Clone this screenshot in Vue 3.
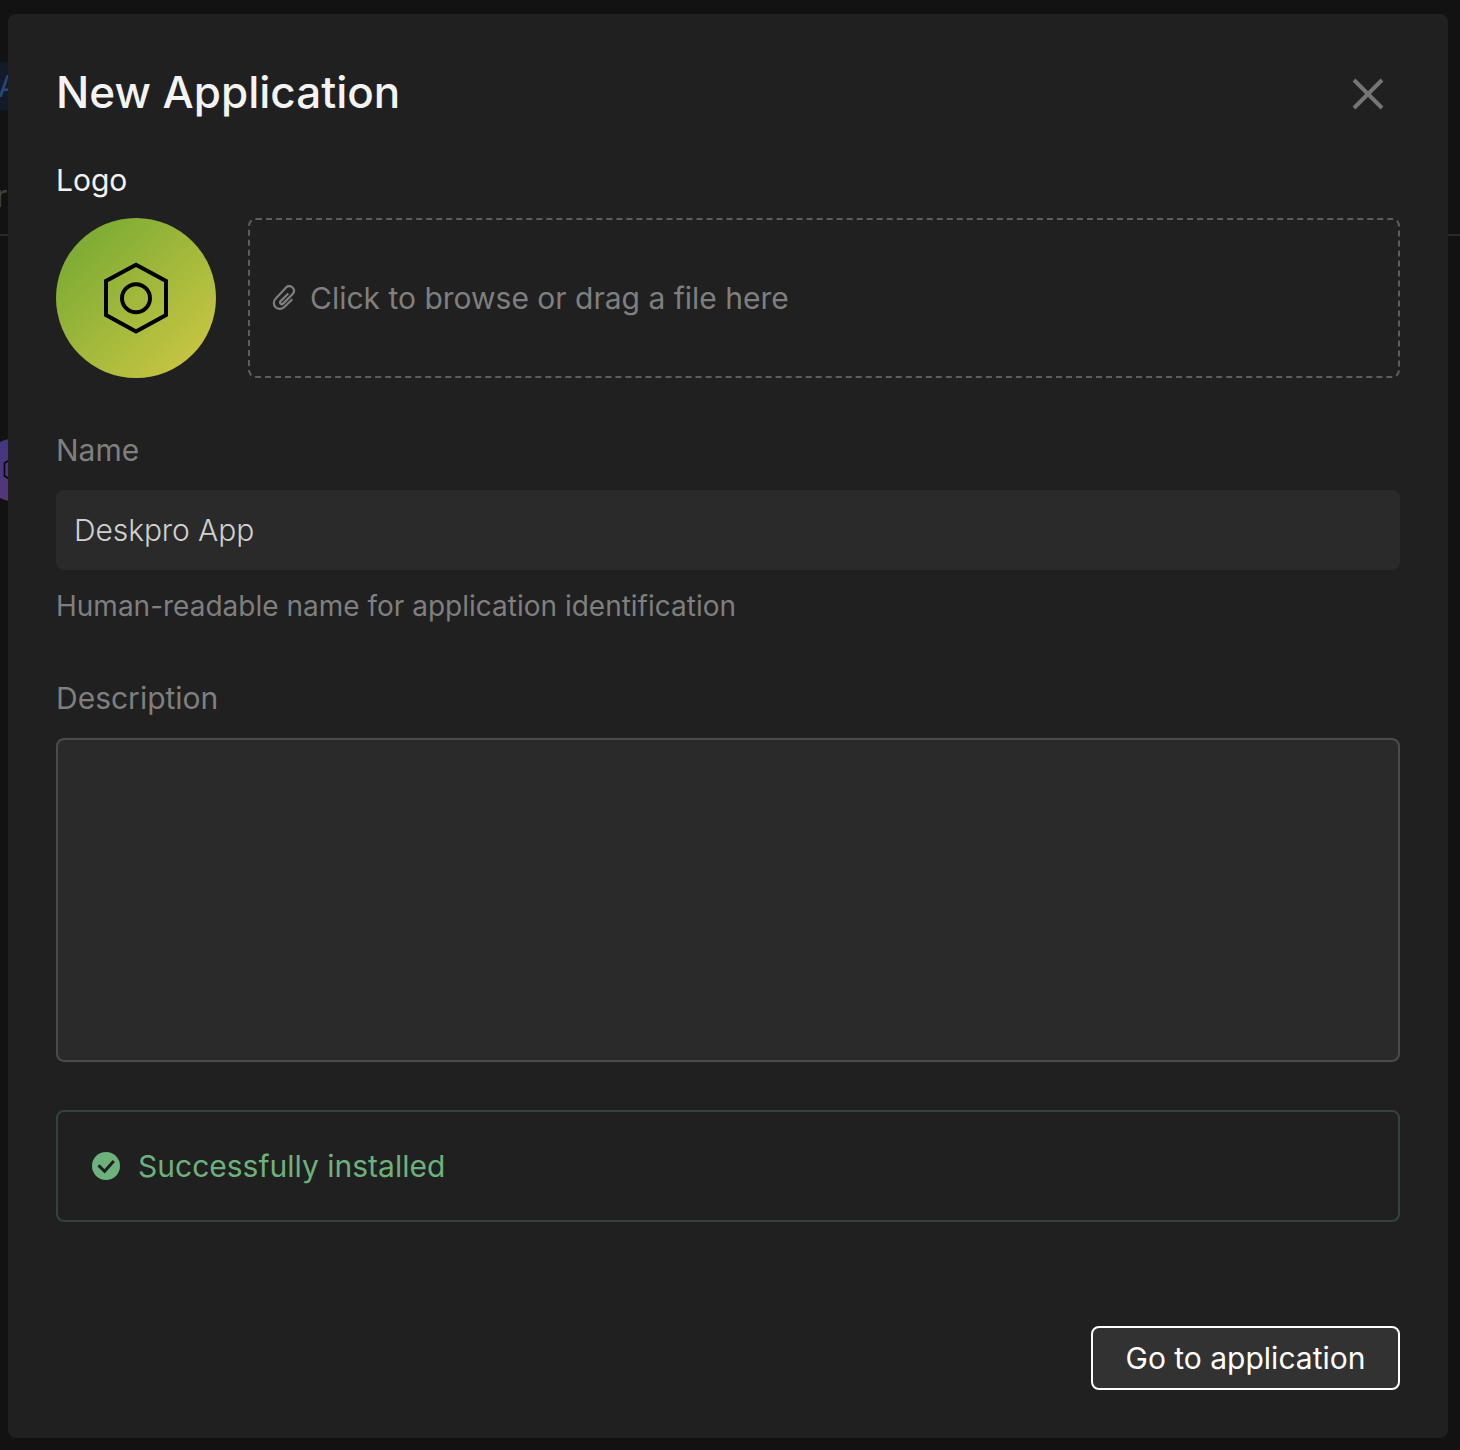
<script setup>
import { ref } from 'vue'

const name = ref('Deskpro App')
const description = ref('')
</script>

<template>
  <div class="page">
    <div class="backdrop" aria-hidden="true">
      <div class="tab">A</div>
      <div class="column">r</div>
      <div class="rule"></div>
      <svg class="app-badge" viewBox="0 0 64 64">
        <defs>
          <linearGradient id="badge" x1="0" y1="0" x2="0" y2="1">
            <stop offset="0" stop-color="#423782" />
            <stop offset="1" stop-color="#573577" />
          </linearGradient>
        </defs>
        <circle cx="32" cy="32" r="32" fill="url(#badge)" />
        <path d="M32 18.500 43.500 25v13L32 45l-11.500-7V25z" fill="none" stroke="#080808" stroke-width="1.600" />
      </svg>
    </div>

    <section class="modal" role="dialog">
      <header class="head">
        <h1>New Application</h1>
        <button class="close" aria-label="Close">
          <svg width="32" height="32" viewBox="0 0 32 32">
            <path d="M2 2 30 30M30 2 2 30" stroke="#757575" stroke-width="4" />
          </svg>
        </button>
      </header>

      <div class="label strong">Logo</div>
      <div class="logo-row">
        <div class="logo">
          <svg width="64" height="72" viewBox="0 0 64 72" fill="none" stroke="#000" stroke-width="4">
            <path d="M32 2.700 62 19v34L32 69.500 2 53V19z" />
            <circle cx="32" cy="36.300" r="14" />
          </svg>
        </div>
        <div class="drop">
          <svg width="24" height="26" viewBox="0 0 24 26" fill="none" stroke="#7f7f7f" stroke-width="2.200">
            <path d="M16.300 8.500 8.600 16.100a1.750 1.750 0 0 0 2.500 2.500L20.900 8.800a4.700 4.700 0 0 0-6.600-6.600L3.600 13.700a6 6 0 0 0 8.500 8.500l8.200-8" />
          </svg>
          <span>Click to browse or drag a file here</span>
        </div>
      </div>

      <div class="label name-label">Name</div>
      <input v-model="name" class="input" />
      <div class="hint">Human-readable name for application identification</div>

      <div class="label desc-label">Description</div>
      <textarea v-model="description" class="area"></textarea>

      <div class="alert">
        <svg width="28" height="28" viewBox="0 0 28 28">
          <circle cx="14" cy="14" r="14" fill="#6db17c" />
          <path d="m6.500 13.400 6.100 5.900L21.800 9" fill="none" stroke="#202020" stroke-width="3" />
        </svg>
        <span>Successfully installed</span>
      </div>

      <footer class="foot">
        <button class="go">Go to application</button>
      </footer>
    </section>
  </div>
</template>

<style>
body {
  background: #121212;
}
</style>

<style scoped>
.page {
  position: relative;
  box-sizing: border-box;
  width: 1460px;
  height: 1450px;
  padding: 14px 12px 12px 8px;
  overflow: hidden;
  background: #121212;
  font-family: Inter, sans-serif;
  font-size: 30px;
}
.backdrop {
  position: absolute;
  inset: 0;
}
.tab {
  position: absolute;
  top: 62px;
  left: 0;
  width: 60px;
  height: 48px;
  background: #141b28;
  color: #23477f;
  line-height: 48px;
  text-indent: -2px;
}
.column {
  position: absolute;
  top: 176px;
  left: -4px;
  color: #414141;
  line-height: 40px;
}
.rule {
  position: absolute;
  top: 234px;
  left: 0;
  width: 100%;
  height: 2px;
  background: #2a2a2a;
}
.app-badge {
  position: absolute;
  top: 438px;
  left: -16px;
  width: 64px;
  height: 64px;
}
.modal {
  position: relative;
  display: flex;
  flex-direction: column;
  box-sizing: border-box;
  height: 1424px;
  padding: 48px;
  border-radius: 8px;
  background: #202020;
}
.head {
  display: flex;
  justify-content: space-between;
  align-items: center;
  height: 60px;
  padding-right: 16px;
}
h1 {
  margin: 0;
  color: #f3f3f3;
  font-size: 44px;
  font-weight: 500;
  line-height: 60px;
}
button {
  padding: 0;
  border: 0;
  background: none;
  font: inherit;
}
.close {
  height: 32px;
  margin-top: 4px;
}
svg {
  display: block;
  flex: none;
}
.label {
  color: #7f7f7f;
  line-height: 40px;
}
.strong {
  margin-top: 38px;
  color: #f3f3f3;
}
.logo-row {
  display: flex;
  gap: 32px;
  margin-top: 18px;
}
.logo {
  display: grid;
  place-items: center;
  width: 160px;
  height: 160px;
  border-radius: 50%;
  background: linear-gradient(135deg, #6fa732 0%, #d2c944 100%);
}
.drop {
  display: flex;
  align-items: center;
  gap: 14px;
  box-sizing: border-box;
  width: 1152px;
  padding-left: 22px;
  border: 2px dashed #5d5d5d;
  border-radius: 8px;
  color: #7f7f7f;
}
.name-label {
  margin-top: 52px;
}
.input,
.area {
  box-sizing: border-box;
  width: 1344px;
  border: 0;
  border-radius: 8px;
  outline: 0;
  background: #2a2a2a;
  color: #d0d0d0;
  font: 300 30px Inter, sans-serif;
  letter-spacing: -0.1px;
}
.input {
  height: 80px;
  margin-top: 20px;
  padding: 0 18px;
}
.hint {
  margin-top: 16px;
  color: #7f7f7f;
  font-size: 28px;
  line-height: 40px;
}
.desc-label {
  margin-top: 52px;
}
.area {
  height: 324px;
  margin-top: 20px;
  border: 2px solid #4b4b4b;
  resize: none;
}
.alert {
  display: flex;
  align-items: center;
  gap: 18px;
  box-sizing: border-box;
  height: 112px;
  margin-top: 48px;
  padding-left: 34px;
  border: 2px solid #34443a;
  border-radius: 8px;
  color: #6db17c;
}
.foot {
  display: flex;
  justify-content: flex-end;
  margin-top: 104px;
}
.go {
  box-sizing: border-box;
  width: 309px;
  height: 64px;
  border: 2px solid #fff;
  border-radius: 8px;
  background: #323232;
  color: #fff;
}
</style>
